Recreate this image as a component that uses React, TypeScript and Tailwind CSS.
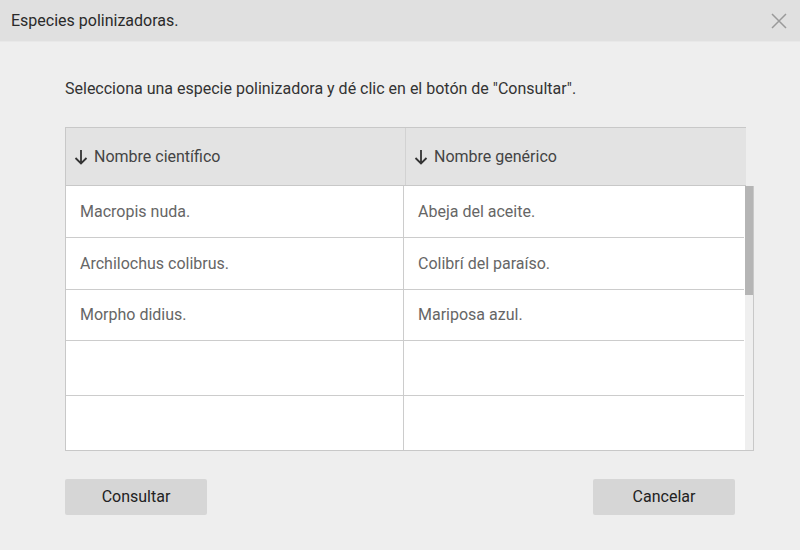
import React from "react";

const rows: [string, string][] = [
  ["Macropis nuda.", "Abeja del aceite."],
  ["Archilochus colibrus.", "Colibrí del paraíso."],
  ["Morpho didius.", "Mariposa azul."],
  ["", ""],
  ["", ""],
];

function Arrow() {
  return (
    <svg width="14" height="16" viewBox="0 0 14 16" className="shrink-0">
      <path d="M7 1V14.5M1.5 9L7 14.5L12.5 9" stroke="#333" strokeWidth="1.8" fill="none" />
    </svg>
  );
}

export default function App() {
  return (
    <div
      className="w-[800px] h-[550px] bg-[#eeeeee] flex flex-col overflow-hidden"
      style={{ fontFamily: "Roboto, 'Liberation Sans', sans-serif" }}
    >
      <div className="h-[42px] bg-[#e0e0e0] border-b border-[#e8e8e8] flex items-center justify-between pl-[11px] pr-[13px] shrink-0">
        <span className="text-[16px] text-[#2a2a2a]">Especies polinizadoras.</span>
        <svg width="16" height="16" viewBox="0 0 16 16">
          <path d="M1 1L15 15M15 1L1 15" stroke="#9a9a9a" strokeWidth="1.5" />
        </svg>
      </div>
      <div className="pl-[65px] pr-[46px] pt-[36px]">
        <p className="text-[16px] text-[#333] leading-[22px]">
          Selecciona una especie polinizadora y dé clic en el botón de "Consultar".
        </p>
        <div className="mt-[27px] w-[689px]">
          <div className="flex w-[681px] h-[59px] bg-[#e3e3e3] border border-[#c8c8c8] border-r-0">
            <div className="w-[340px] border-r border-[#d2d2d2] flex items-center gap-[6px] pl-[8px] text-[16px] text-[#444]">
              <Arrow />
              Nombre científico
            </div>
            <div className="flex-1 flex items-center gap-[6px] pl-[8px] text-[16px] text-[#444]">
              <Arrow />
              Nombre genérico
            </div>
          </div>
          <div className="flex h-[265px] border border-t-0 border-[#c8c8c8] bg-white">
            <div className="flex-1 flex flex-col">
              {rows.map((r, i) => (
                <div
                  key={i}
                  className={
                    "flex border-b border-[#cccccc] " + (i === 3 ? "h-[55px]" : i === 4 ? "h-[54px] border-b-0" : "h-[52px]")
                  }
                >
                  <div className="w-[338px] border-r border-[#cccccc] flex items-center pl-[14px] pt-[1px] text-[16px] text-[#666]">
                    {r[0]}
                  </div>
                  <div className="flex-1 flex items-center pl-[14px] pt-[1px] text-[16px] text-[#666]">{r[1]}</div>
                </div>
              ))}
            </div>
            <div className="w-[8px] ml-[1px] bg-[#efefef] flex flex-col">
              <div className="h-[109px] bg-[#b5b5b5]" />
            </div>
          </div>
        </div>
        <div className="flex justify-between w-[670px] mt-[28px]">
          <button className="w-[142px] h-[36px] bg-[#d6d6d6] rounded-[2px] text-[16px] text-[#222]">Consultar</button>
          <button className="w-[142px] h-[36px] bg-[#d6d6d6] rounded-[2px] text-[16px] text-[#222]">Cancelar</button>
        </div>
      </div>
    </div>
  );
}
